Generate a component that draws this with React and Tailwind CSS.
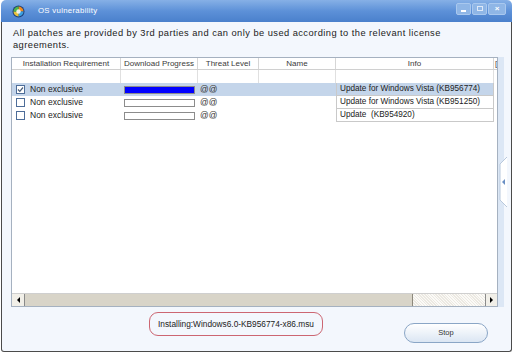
import React from 'react';

const columns = [
  { label: 'Installation Requirement', w: 'w-[109px]' },
  { label: 'Download Progress', w: 'w-[77px]' },
  { label: 'Threat Level', w: 'w-[61px]' },
  { label: 'Name', w: 'w-[77px]' },
  { label: 'Info', w: 'w-[158px]' },
];

const patches = [
  { checked: true, progress: 100, info: 'Update for Windows Vista (KB956774)', selected: true },
  { checked: false, progress: 0, info: 'Update for Windows Vista (KB951250)' },
  { checked: false, progress: 0, info: 'Update  (KB954920)' },
];

const Globe = () => (
  <svg width="13" height="13" viewBox="0 0 13 13">
    <circle cx="6.5" cy="6.5" r="6" fill="#1d3f7a" />
    <path d="M6.5 1.5 A5 5 0 0 1 11.5 6.5 L6.5 6.5 Z" fill="#f08a1c" />
    <path d="M11.5 6.5 A5 5 0 0 1 6.5 11.5 L6.5 6.5 Z" fill="#3aa0e0" />
    <path d="M6.5 11.5 A5 5 0 0 1 1.5 6.5 L6.5 6.5 Z" fill="#e8c23a" />
    <path d="M1.5 6.5 A5 5 0 0 1 6.5 1.5 L6.5 6.5 Z" fill="#4fb548" />
    <circle cx="6.5" cy="6.5" r="2.2" fill="#ffffff" opacity="0.85" />
  </svg>
);

const Checkbox = ({ checked }) => (
  <div className="w-[9px] h-[9px] border border-[#4d6d99] bg-white flex items-center justify-center">
    {checked && (
      <svg width="7" height="7" viewBox="0 0 7 7">
        <path d="M1 3.5 L2.8 5.3 L6 1.5" stroke="#4a5d78" strokeWidth="1.2" fill="none" />
      </svg>
    )}
  </div>
);

const App = () => {
  return (
    <div className="w-[513px] h-[354px] bg-white font-['Liberation_Sans',Arial,sans-serif] text-[#222]">
      <div className="ml-[1px] w-[511px] h-[352px] flex flex-col">
        {/* Title bar */}
        <div className="h-[22px] rounded-t-[5px] bg-gradient-to-b from-[#86b0e6] via-[#5d91d8] to-[#4a80cc] flex items-center pl-[11px] pr-[6px]">
          <Globe />
          <span className="ml-[13px] text-[7.8px] text-white tracking-[0.3px]">OS vulnerability</span>
          <div className="ml-auto flex items-center gap-[1px] mb-[5px]">
            <div className="w-[15px] h-[12px] rounded-[2px] bg-[#8fb6e6] border border-[#a9c8ee] flex items-end justify-center pb-[2px]">
              <div className="w-[5px] h-[1.5px] bg-white" />
            </div>
            <div className="w-[15px] h-[12px] rounded-[2px] bg-[#8fb6e6] border border-[#a9c8ee] flex items-center justify-center">
              <div className="w-[6px] h-[5px] border border-white/70" />
            </div>
            <div className="w-[18px] h-[12px] rounded-[2px] bg-[#8fb6e6] border border-[#a9c8ee] flex items-center justify-center text-white text-[8px] font-bold leading-none">
              ×
            </div>
          </div>
        </div>

        {/* Body */}
        <div className="flex-1 flex flex-col bg-[#f3f7fd] border-l border-r border-b border-[#4b4b4b] rounded-b-[3px]">
          <p className="pt-[5px] pl-[11px] w-[462px] text-[9.3px] leading-[12px] tracking-[0.45px] text-[#222]">
            All patches are provided by 3rd parties and can only be used according to the relevant license agreements.
          </p>

          <div className="mt-[6px] flex">
            {/* Table */}
            <div className="ml-[9px] w-[487px] h-[250px] border border-[#a5b1c0] bg-white flex flex-col overflow-hidden">
              <div className="flex h-[12px] border-b border-[#d0d0d0] shrink-0">
                {columns.map((c) => (
                  <div
                    key={c.label}
                    className={`${c.w} shrink-0 border-r border-[#d6d6d6] text-center text-[8px] leading-[11px] text-[#3a3a3a] whitespace-nowrap`}
                  >
                    {c.label}
                  </div>
                ))}
                <div className="flex-1 pl-[1px] text-[8px] leading-[11px] text-[#3a3a3a] overflow-hidden">[</div>
              </div>
              <div className="flex h-[13px] shrink-0">
                {columns.map((c) => (
                  <div key={c.label} className={`${c.w} shrink-0 border-r border-[#e0e0e0]`} />
                ))}
              </div>
              {patches.map((p, i) => (
                <div
                  key={i}
                  className={`flex h-[13px] shrink-0 items-center w-[482px] ${p.selected ? 'bg-[#c4d5ea]' : ''}`}
                >
                  <div className="w-[109px] shrink-0 flex items-center pl-[4px]">
                    <Checkbox checked={p.checked} />
                    <span className="ml-[5px] text-[8.5px] leading-[13px]">Non exclusive</span>
                  </div>
                  <div className="w-[77px] shrink-0 pl-[3px]">
                    <div className="w-[71px] h-[8px] border border-[#8c8c8c] bg-white">
                      <div className="h-full bg-[#0000ff]" style={{ width: `${p.progress}%` }} />
                    </div>
                  </div>
                  <div className="w-[61px] shrink-0 pl-[2px] text-[8.5px] leading-[13px] text-[#333]">@@</div>
                  <div className="w-[77px] shrink-0" />
                  <div className="w-[158px] shrink-0 h-[13px] border-l border-r border-b border-[#c9c9c9] pl-[3px] text-[8.2px] leading-[12px] whitespace-pre">
                    {p.info}
                  </div>
                </div>
              ))}
              <div className="flex-1" />

              {/* Horizontal scrollbar */}
              <div className="h-[13px] shrink-0 flex border-t border-[#cfcfcf]">
                <div className="w-[13px] h-full bg-[#f1efe8] border-r border-[#8a8a8a] flex items-center justify-center">
                  <div className="w-0 h-0 border-y-[3px] border-y-transparent border-r-[3px] border-r-black" />
                </div>
                <div className="w-[388px] h-full bg-[#d8d4c8] border-r border-[#8c887c]" />
                <div className="flex-1 h-full bg-[repeating-linear-gradient(45deg,#ece9e2_0px,#ece9e2_1px,#fbfaf7_1px,#fbfaf7_2px)]" />
                <div className="w-[12px] h-full bg-[#f1efe8] border-l border-[#8a8a8a] flex items-center justify-center">
                  <div className="w-0 h-0 border-y-[3px] border-y-transparent border-l-[3px] border-l-black" />
                </div>
              </div>
            </div>

            {/* Side strip with collapse tab */}
            <div className="w-[12px] h-[250px] flex items-center">
              <div className="w-[6px] h-full bg-[#dce7f5] flex items-center">
                <svg width="10" height="52" viewBox="0 0 10 52" className="shrink-0">
                  <path d="M9 1 L2 8 L2 44 L9 51" stroke="#b8c8dc" strokeWidth="1" fill="#ffffff" />
                  <path d="M7 23 L4 26 L7 29 Z" fill="#6a8fc4" />
                </svg>
              </div>
            </div>
          </div>

          {/* Bottom controls */}
          <div className="flex items-start">
            <div className="ml-[147px] mt-[5px] w-[174px] h-[24px] rounded-[9px] border border-[#cc6672] flex items-center justify-center text-[8.3px] text-[#222] whitespace-nowrap">
              Installing:Windows6.0-KB956774-x86.msu
            </div>
            <div className="ml-[81px] mt-[16px] w-[84px] h-[20px] rounded-full border border-[#8aa6c6] bg-gradient-to-b from-white to-[#dbe6f3] flex items-center justify-center text-[7.5px] text-[#333]">
              Stop
            </div>
          </div>
        </div>
      </div>
    </div>
  );
};

export default App;
